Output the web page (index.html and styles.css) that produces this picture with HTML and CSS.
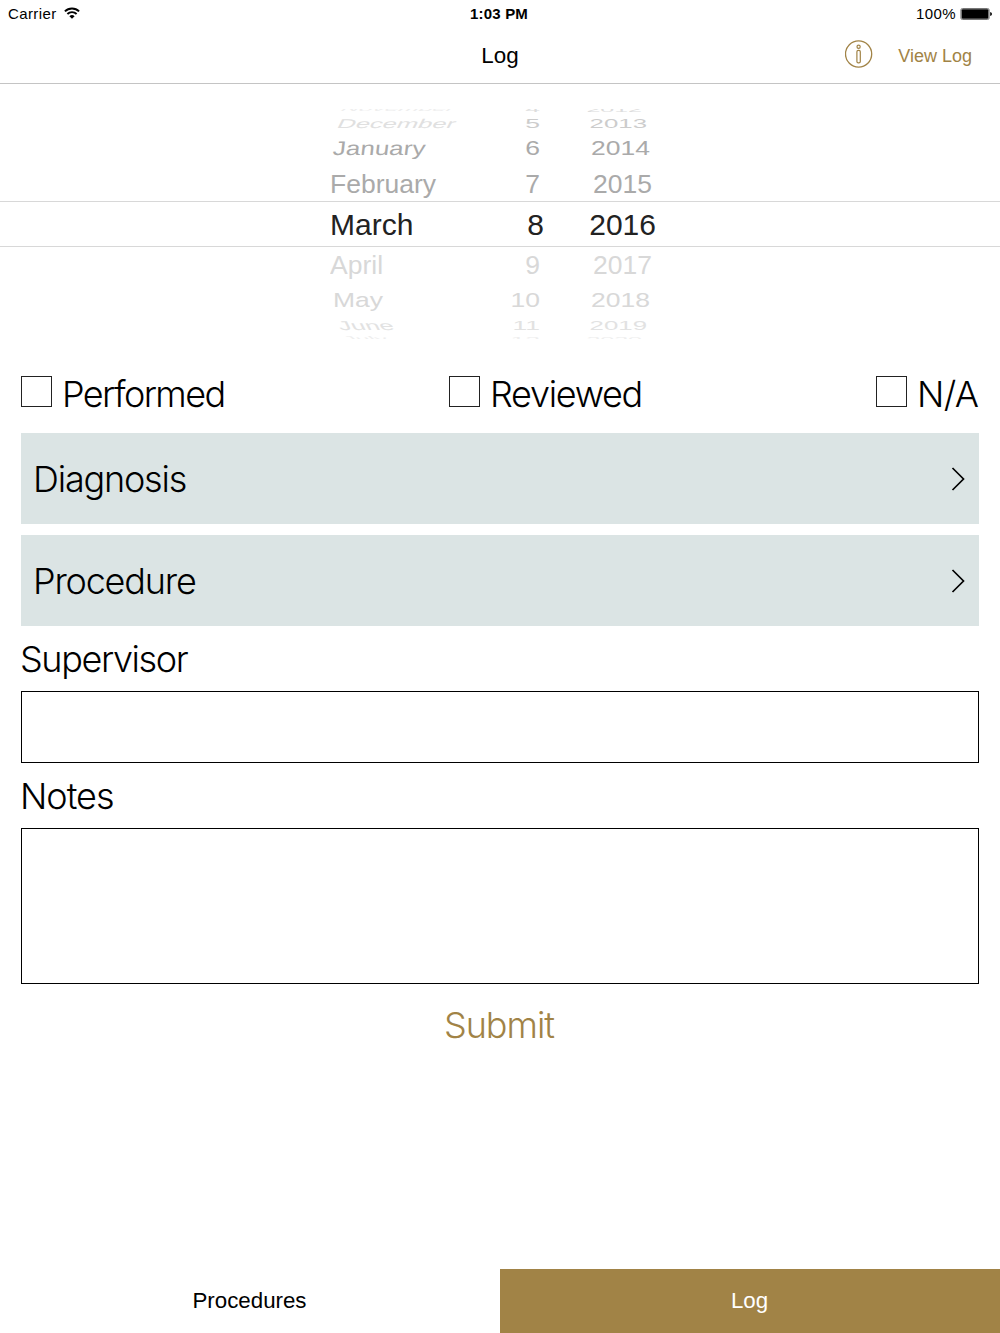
FILE: index.html
```
<!DOCTYPE html>
<html lang="en">

<head>
    <meta charset="UTF-8">
    <meta name="viewport" content="width=device-width, initial-scale=1.0">
    <title>Log</title>
    <link rel="stylesheet" href="styles.css">
</head>
<body>
    <div class="status">
        <div class="carrier">
            <span>Carrier</span>
            <svg width="16" height="12" viewBox="0 0 16 12">
                <path d="M0.9 4.4A10 10 0 0 1 15.1 4.4" fill="none" stroke="#000" stroke-width="1.9"/>
                <path d="M3.4 7A6.5 6.5 0 0 1 12.6 7" fill="none" stroke="#000" stroke-width="1.9"/>
                <path d="M5.4 9.2A3.7 3.7 0 0 1 10.6 9.2L8 11.8Z"/>
            </svg>
        </div>
        <div class="time">1:03 PM</div>
        <div class="battery">
            <span>100%</span>
            <svg width="32" height="12" viewBox="0 0 32 12">
                <rect x="0.9" y="0.5" width="28.2" height="11" rx="1.5" fill="#fff" stroke="#777"/>
                <rect x="1.6" y="1.2" width="26.8" height="9.6" rx="1"/>
                <path d="M30.2 4Q32 4.4 32 6T30.2 8Z"/>
            </svg>
        </div>
    </div>
    <div class="nav">
        <div></div>
        <h1>Log</h1>
        <div class="actions">
            <svg width="28" height="28" viewBox="0 0 28 28" fill="none" stroke="#a18346">
                <circle cx="13.6" cy="14" r="13.1" stroke-width="1.3"/>
                <circle cx="13.6" cy="6.8" r="1.6" stroke-width="1.2"/>
                <rect x="11.9" y="10.4" width="3.4" height="12.4" rx="1.4" stroke-width="1.2"/>
            </svg>
            <a class="view">View Log</a>
        </div>
    </div>

    <div class="picker">
        <div class="wheel month">
            <span class="far2 up">November</span>
            <span class="far up">December</span>
            <span class="mid up jan">January</span>
            <span class="near up">February</span>
            <span class="now">March</span>
            <span class="near down">April</span>
            <span class="mid down">May</span>
            <span class="far down">June</span>
            <span class="far2 down">July</span>
        </div>
        <div class="wheel day">
            <span class="far2 up">4</span>
            <span class="far up">5</span>
            <span class="mid up">6</span>
            <span class="near up">7</span>
            <span class="now">8</span>
            <span class="near down">9</span>
            <span class="mid down">10</span>
            <span class="far down">11</span>
            <span class="far2 down">12</span>
        </div>
        <div class="wheel year">
            <span class="far2 up">2012</span>
            <span class="far up">2013</span>
            <span class="mid up">2014</span>
            <span class="near up">2015</span>
            <span class="now">2016</span>
            <span class="near down">2017</span>
            <span class="mid down">2018</span>
            <span class="far down">2019</span>
            <span class="far2 down">2020</span>
        </div>
        <div class="band"></div>
    </div>

    <div class="form">
        <div class="checks">
            <div class="check"><i></i><span class="performed">Performed</span></div>
            <div class="check"><i></i><span class="reviewed">Reviewed</span></div>
            <div class="check"><i></i><span class="na">N/A</span></div>
        </div>
        <div class="row">
            <span>Diagnosis</span>
            <svg width="14" height="24" viewBox="0 0 14 24"><path d="M1.5 1L12.5 12L1.5 23" fill="none" stroke="#000" stroke-width="1.7"/></svg>
        </div>
        <div class="row">
            <span>Procedure</span>
            <svg width="14" height="24" viewBox="0 0 14 24"><path d="M1.5 1L12.5 12L1.5 23" fill="none" stroke="#000" stroke-width="1.7"/></svg>
        </div>
        <div class="label supervisor">Supervisor</div>
        <div class="field"></div>
        <div class="label notes">Notes</div>
        <div class="field area"></div>
        <div class="submit">Submit</div>
    </div>

    <div class="tabs">
        <div class="tab">Procedures</div>
        <div class="tab active">Log</div>
    </div>
</body>
</html>
```
FILE: styles.css
```
*{
    margin: 0;
    padding: 0;
    box-sizing: border-box;
}
body{
    width: 1000px;
    height: 1333px;
    display: flex;
    flex-direction: column;
    background: #fff;
    color: #000;
    font-family: "Liberation Sans", Arial, sans-serif;
    overflow: hidden;
}

/* status bar */
.status{
    height: 27px;
    padding: 0 8px;
    display: grid;
    grid-template-columns: 1fr auto 1fr;
    align-items: center;
    font-size: 15px;
}
.carrier, .battery{
    display: flex;
    align-items: center;
    letter-spacing: 0.4px;
}
.carrier{
    gap: 7px;
}
.carrier svg{
    margin-bottom: 2px;
}
.battery{
    justify-content: flex-end;
    gap: 4px;
}
.time{
    font-weight: bold;
    font-size: 15px;
    padding-right: 2px;
    letter-spacing: 0.2px;
}

/* navigation bar */
.nav{
    height: 57px;
    display: grid;
    grid-template-columns: 1fr auto 1fr;
    align-items: center;
    border-bottom: 1px solid #c4c4c4;
}
.nav h1{
    font-size: 22.4px;
    font-weight: normal;
    padding-top: 1px;
}
.actions{
    display: flex;
    justify-content: flex-end;
    align-items: center;
    gap: 25px;
    padding-right: 28px;
    padding-bottom: 2px;
    color: #a18346;
}
.view{
    font-size: 18px;
    padding-top: 5px;
}

/* date picker */
.picker{
    height: 230px;
    margin-top: 25px;
    display: flex;
    position: relative;
    overflow: hidden;
    padding-left: 330px;
}
.wheel{
    display: grid;
    grid-template-rows: 13px 15px 35px 37px 45px 36px 34px 15px 14px;
    margin-top: -7px;
    height: 244px;
    align-items: center;
}
.month{
    width: 119px;
}
.day{
    width: 95px;
    justify-items: end;
}
.year{
    width: 112px;
    justify-items: end;
}
.wheel span{
    font-size: 26.5px;
    line-height: 30px;
    margin: -10px 0;
    white-space: nowrap;
}
.wheel .now{
    font-size: 30px;
    color: #222;
}
.up{
    color: #aaa;
}
.down{
    color: #d8d8d8;
}
.near{
    transform: scaleY(0.98);
}
.mid{
    transform: scaleY(0.75);
}
.far{
    transform: scaleY(0.5);
}
.far2{
    transform: scaleY(0.28);
}
.far.up{
    color: #ccc;
}
.far2.up{
    color: #ddd;
}
.far.down{
    color: #e2e2e2;
}
.far2.down{
    color: #eee;
}
.month .far.up{
    color: #e0e0e0;
    font-size: 25.5px;
    transform: scaleY(0.5) skewX(-14deg);
    padding-left: 8px;
}
.month .far2.up{
    color: #eee;
    font-size: 24.5px;
    transform: scaleY(0.28) skewX(-20deg);
    padding-left: 12px;
}
.month .far.down{
    font-size: 25.5px;
    transform: scaleY(0.5) skewX(14deg);
    padding-left: 8px;
}
.month .far2.down{
    font-size: 24.5px;
    transform: scaleY(0.28) skewX(20deg);
    padding-left: 14px;
}
.month .mid{
    padding-left: 3px;
}
.month .jan{
    font-size: 26px;
    transform: scaleY(0.75) skewX(-5deg);
}
.day span{
    padding-right: 4px;
}
.day .now{
    padding-right: 0;
}
.year .near{
    padding-right: 4px;
}
.year .mid{
    padding-right: 6px;
}
.year .far{
    font-size: 25.8px;
    padding-right: 9px;
}
.year .far2{
    font-size: 25px;
    padding-right: 14px;
}
.band{
    position: absolute;
    left: 0;
    right: 0;
    top: 92px;
    height: 46px;
    border-top: 1px solid #d8d8d8;
    border-bottom: 1px solid #d8d8d8;
}

/* form */
.form{
    flex: 1;
    padding: 0 21px;
    margin-top: 37px;
    font-family: Inter, "Liberation Sans", sans-serif;
    font-weight: 300;
    font-size: 36px;
    line-height: 44px;
    letter-spacing: -1px;
}
.checks{
    display: grid;
    grid-template-columns: 428px 427px auto;
    height: 57px;
}
.check{
    display: flex;
    align-items: center;
    height: 31px;
    gap: 10px;
}
.check span{
    padding-top: 4px;
}
.check i{
    width: 31px;
    height: 31px;
    border: 1px solid #222;
}
.performed{
    letter-spacing: -1.6px;
}
.reviewed{
    letter-spacing: -1.3px;
}
.na{
    letter-spacing: -0.6px;
}
.row{
    display: flex;
    align-items: center;
    justify-content: space-between;
    height: 91px;
    margin-bottom: 11px;
    padding: 0 14px 0 12px;
    letter-spacing: -1.2px;
    background: #dbe4e4;
}
.row + .row{
    margin-bottom: 0;
}
.label{
    display: flex;
    align-items: center;
    height: 65px;
}
.supervisor{
    letter-spacing: -1.4px;
    text-indent: -1px;
}
.notes{
    text-indent: -1px;
}
.field{
    height: 72px;
    border: 1px solid #000;
}
.field.area{
    height: 156px;
}
.submit{
    text-align: center;
    color: #a18346;
    padding: 19px 2px 0 0;
}

/* tab bar */
.tabs{
    display: flex;
    height: 64px;
}
.tab{
    flex: 1;
    display: flex;
    align-items: center;
    justify-content: center;
    padding-right: 1px;
    font-size: 22.3px;
}
.tab.active{
    background: #a18346;
    color: #fff;
}
```
